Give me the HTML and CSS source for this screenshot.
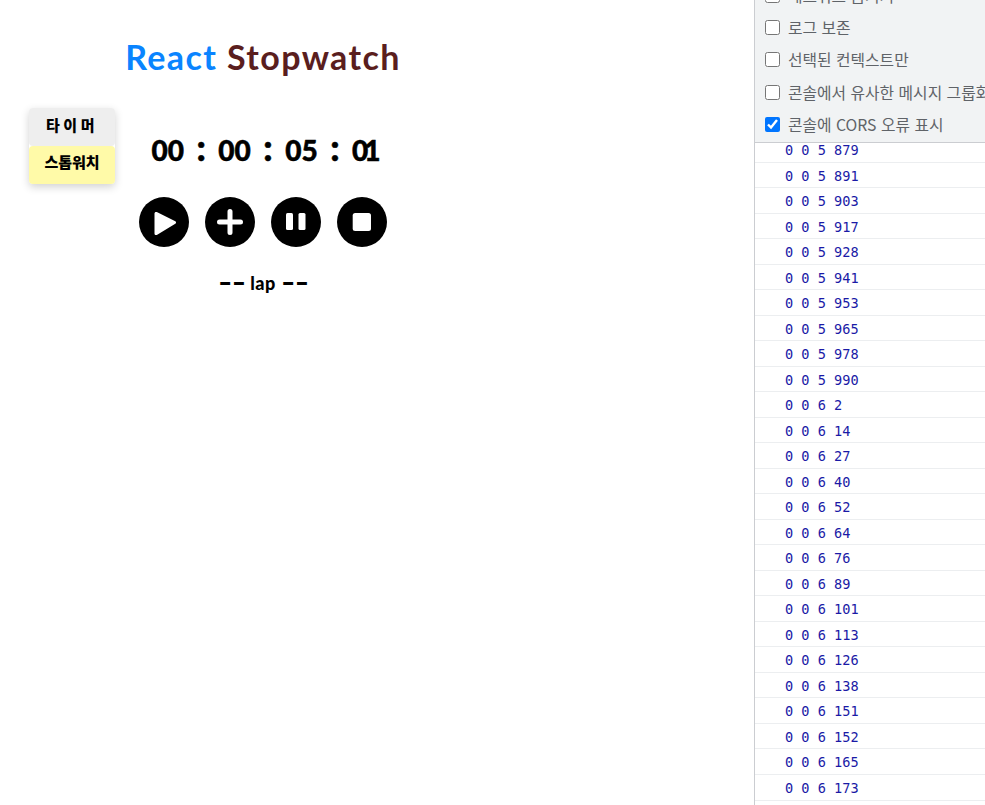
FILE: index.html
```html
<!DOCTYPE html>
<html lang="ko">
<head>
<meta charset="utf-8">
<title>React Stopwatch</title>
<link rel="stylesheet" href="styles.css">
</head>
<body>
<div class="page">
  <main class="app">
    <nav class="tabs">
      <div class="tab tab-idle">타이머</div>
      <div class="tab tab-active">스톱워치</div>
    </nav>
    <section class="watch">
      <h1 class="title"><span class="title-blue">React</span> <span class="title-brown">Stopwatch</span></h1>
      <div class="time">
        <span class="digits">00</span><span class="colon">:</span><span class="digits">00</span><span class="colon">:</span><span class="digits">05</span><span class="colon">:</span><span class="digits digits-narrow">01</span>
      </div>
      <div class="controls">
        <button class="round" aria-label="시작"><svg viewBox="0 0 50 50" width="50" height="50"><path d="M15.500 16.500v20c0 1.300 1.200 2 2.300 1.400l18.500-11.100c1-.6 1-2 0-2.600l-18.500-9.100c-1.100-.6-2.300.1-2.300 1.400z" fill="#fff"/></svg></button>
        <button class="round" aria-label="랩"><svg viewBox="0 0 50 50" width="50" height="50"><path d="M25 14.500v21M14.500 25h21" stroke="#fff" stroke-width="5" stroke-linecap="round" fill="none"/></svg></button>
        <button class="round" aria-label="일시정지"><svg viewBox="0 0 50 50" width="50" height="50"><rect x="15" y="16" width="7" height="17" rx="1.500" fill="#fff"/><rect x="27.500" y="16" width="7" height="17" rx="1.500" fill="#fff"/></svg></button>
        <button class="round" aria-label="정지"><svg viewBox="0 0 50 50" width="50" height="50"><rect x="15.700" y="16" width="18.300" height="18" rx="2.500" fill="#fff"/></svg></button>
      </div>
      <div class="lap"><span class="dash">--</span> lap <span class="dash">--</span></div>
    </section>
  </main>
  <aside class="devtools">
    <div class="settings">
      <label class="setting"><input type="checkbox" class="check">네트워크 숨기기</label>
      <label class="setting"><input type="checkbox" class="check">로그 보존</label>
      <label class="setting"><input type="checkbox" class="check">선택된 컨텍스트만</label>
      <label class="setting"><input type="checkbox" class="check">콘솔에서 유사한 메시지 그룹화</label>
      <label class="setting"><input type="checkbox" class="check" checked>콘솔에 CORS 오류 표시</label>
    </div>
    <div class="log">
      <div class="log-inner">
        <div class="row">0 0 5 879</div>
        <div class="row">0 0 5 891</div>
        <div class="row">0 0 5 903</div>
        <div class="row">0 0 5 917</div>
        <div class="row">0 0 5 928</div>
        <div class="row">0 0 5 941</div>
        <div class="row">0 0 5 953</div>
        <div class="row">0 0 5 965</div>
        <div class="row">0 0 5 978</div>
        <div class="row">0 0 5 990</div>
        <div class="row">0 0 6 2</div>
        <div class="row">0 0 6 14</div>
        <div class="row">0 0 6 27</div>
        <div class="row">0 0 6 40</div>
        <div class="row">0 0 6 52</div>
        <div class="row">0 0 6 64</div>
        <div class="row">0 0 6 76</div>
        <div class="row">0 0 6 89</div>
        <div class="row">0 0 6 101</div>
        <div class="row">0 0 6 113</div>
        <div class="row">0 0 6 126</div>
        <div class="row">0 0 6 138</div>
        <div class="row">0 0 6 151</div>
        <div class="row">0 0 6 152</div>
        <div class="row">0 0 6 165</div>
        <div class="row">0 0 6 173</div>
      </div>
    </div>
  </aside>
</div>
</body>
</html>
```
FILE: styles.css
```css
html, body {
  margin: 0;
  height: 100%;
  background: #fff;
  overflow: hidden;
}
.page {
  display: flex;
  height: 805px;
  overflow: hidden;
}
.app {
  width: 754px;
  flex: none;
  display: flex;
  align-items: flex-start;
  padding-left: 29px;
  box-sizing: border-box;
  font-family: "Noto Sans CJK KR", "Noto Sans", sans-serif;
  color: #000;
}
.tabs {
  width: 86px;
  margin-top: 108px;
  border-radius: 4px;
  box-shadow: 0 3px 8px rgba(0, 0, 0, 0.18);
  flex: none;
}
.tab {
  height: 38px;
  box-sizing: border-box;
  display: flex;
  align-items: center;
  justify-content: center;
  font-size: 15px;
  font-weight: 900;
  border-radius: 4px;
}
.tab-idle {
  background: #eeeeee;
  padding-bottom: 5px;
  letter-spacing: 3.500px;
}
.tab-active {
  background: #fffaa8;
  padding-bottom: 7px;
}
.watch {
  width: 296px;
  display: flex;
  flex-direction: column;
  align-items: center;
}
.title {
  margin: 35px 0 0;
  font-size: 34px;
  line-height: 44px;
  font-weight: 700;
  font-family: "Lato", "Noto Sans", sans-serif;
  white-space: nowrap;
  letter-spacing: 1.400px;
}
.title-blue { color: #0a84ff; }
.title-brown { color: #5a1e1e; }
.time {
  margin-top: 47px;
  margin-left: 2px;
  height: 48px;
  display: flex;
  align-items: center;
  font-size: 28px;
  font-weight: 900;
  font-family: "Lato", "Noto Sans", sans-serif;
  gap: 12.500px;
  -webkit-text-stroke: 0.5px #000;
}
.colon {
  font-size: 36px;
  line-height: 48px;
  margin-top: -6px;
}
.digits-narrow { letter-spacing: -4px; }
.controls {
  margin-top: 23px;
  display: flex;
  gap: 16px;
}
.round {
  width: 50px;
  height: 50px;
  padding: 0;
  border: 0;
  border-radius: 50%;
  background: #000;
  display: block;
}
.round svg { display: block; }
.lap {
  margin-top: 24px;
  height: 24px;
  display: flex;
  align-items: center;
  gap: 5px;
  font-size: 18px;
  line-height: 24px;
  font-weight: 900;
  font-family: "Lato", "Noto Sans", sans-serif;
  letter-spacing: 0.4px;
}
.dash {
  font-size: 40px;
  line-height: 24px;
  font-weight: 400;
  letter-spacing: -1px;
  margin-top: -4px;
}
.devtools {
  flex: 1;
  min-width: 0;
  border-left: 1px solid #cbcdd1;
  display: flex;
  flex-direction: column;
  overflow: hidden;
}
.settings {
  height: 143px;
  flex: none;
  box-sizing: border-box;
  background: #f1f3f4;
  border-bottom: 1px solid #cbcdd1;
  display: flex;
  flex-direction: column;
  justify-content: flex-end;
  overflow: hidden;
  padding-bottom: 1.500px;
}
.setting {
  height: 32.300px;
  flex: none;
  display: flex;
  align-items: center;
  padding-left: 10px;
  font-family: "Noto Sans CJK KR", sans-serif;
  font-size: 15.800px;
  color: #5f6368;
  white-space: nowrap;
}
.check {
  width: 15px;
  height: 15px;
  margin: 0 8px 0 0;
  flex: none;
}
.log {
  flex: 1;
  overflow: hidden;
}
.log-inner { margin-top: -5.900px; }
.row {
  height: 25.520px;
  box-sizing: border-box;
  border-bottom: 1px solid #eceef0;
  padding-left: 30px;
  font-family: "DejaVu Sans Mono", monospace;
  font-size: 13.600px;
  line-height: 26.400px;
  color: #1a1aa6;
  white-space: pre;
}
```
